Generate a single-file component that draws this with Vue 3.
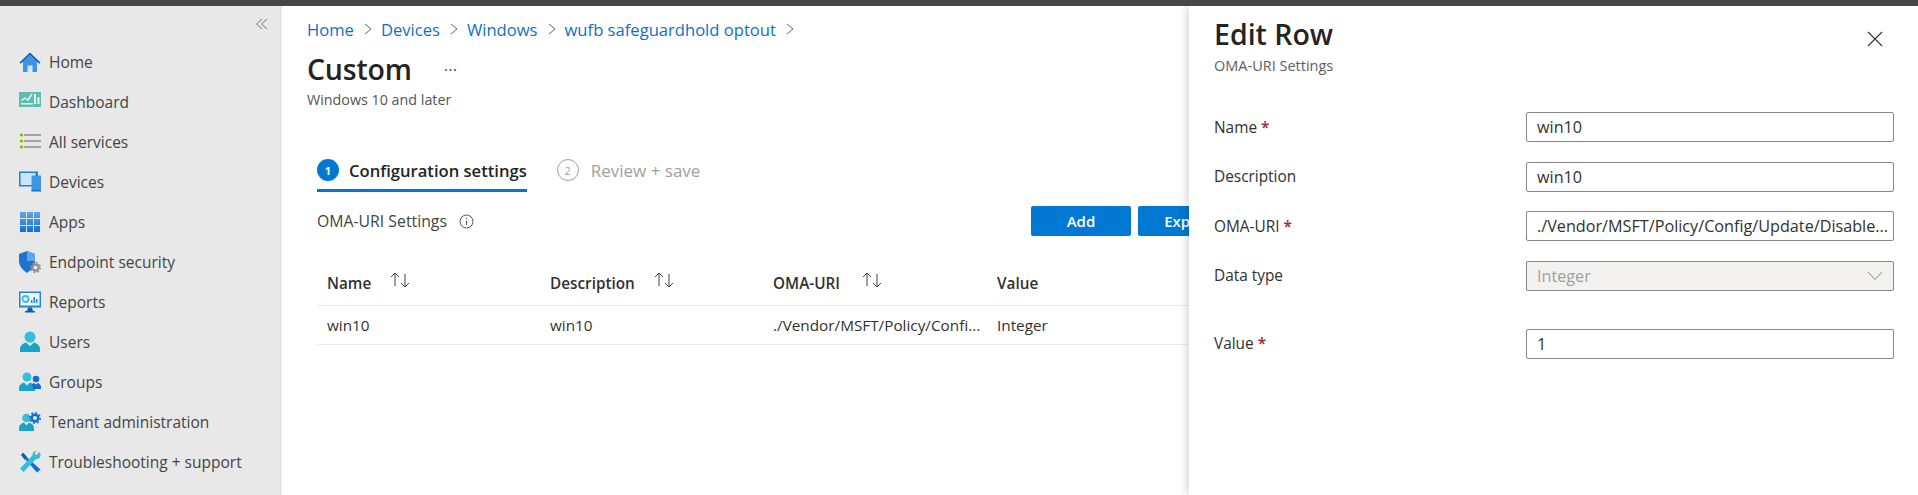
<script setup>
const crumbs = ['Home', 'Devices', 'Windows', 'wufb safeguardhold optout']
</script>

<template>
  <div class="page">
    <div class="topbar"></div>
    <div class="body">
      <aside class="side">
        <div class="collapse">
          <svg width="14" height="14" viewBox="0 0 14 14" fill="none" stroke="#777" stroke-width="1"><path d="M7 2 1.5 7 7 12M12 2 6.5 7 12 12"/></svg>
        </div>
        <nav class="nav">
          <a class="item"><svg class="ic" viewBox="0 0 22 22"><path d="M4 10.5 11 4l7 6.5V21H4z" fill="#3f92e8"/><path d="M0.5 11.5 11 1.5l10.5 10-1.2 1.2L11 4 1.7 12.7z" fill="#0b63b5"/><rect x="8.5" y="14.5" width="5" height="6.5" fill="#d4e6f7"/></svg><span>Home</span></a>
          <a class="item"><svg class="ic" viewBox="0 0 22 22"><rect y="1" width="22" height="15" fill="#5fbdb0"/><path d="M2.5 9.5 6 7l3 2 4-6" fill="none" stroke="#e5f6f3" stroke-width="1.4"/><rect x="2" y="12" width="12" height="1.5" fill="#e5f6f3"/><rect x="15" y="3" width="2" height="10" fill="#e5f6f3"/><rect x="18.5" y="6" width="2" height="7" fill="#e5f6f3"/></svg><span>Dashboard</span></a>
          <a class="item"><svg class="ic" viewBox="0 0 22 22"><path d="M5 4h17M5 10h17M5 16h17" stroke="#8a8a8a" stroke-width="1.3"/><path d="M1 4h3M1 10h3M1 16h3" stroke="#7fba00" stroke-width="2.4"/></svg><span>All services</span></a>
          <a class="item"><svg class="ic" viewBox="0 0 22 22"><rect y="0.5" width="19" height="15" fill="#1f7fd8"/><rect x="1.5" y="2" width="15" height="12" fill="#c9e6fa"/><rect x="12.5" y="4.5" width="9.5" height="15.5" fill="#3f92e8"/><rect x="12.5" y="19" width="9.5" height="1.5" fill="#0f6cc0"/></svg><span>Devices</span></a>
          <a class="item"><svg class="ic" viewBox="0 0 22 22"><defs><linearGradient id="ap" x1="0" y1="0" x2="0" y2="1"><stop offset="0" stop-color="#5ea7ef"/><stop offset="1" stop-color="#0f6fd4"/></linearGradient></defs><path d="M1 1h6v6H1zM8 1h6v6H8zM15 1h6v6h-6zM1 8h6v6H1zM8 8h6v6H8zM15 8h6v6h-6zM1 15h6v6H1zM8 15h6v6H8zM15 15h6v6h-6z" fill="url(#ap)"/></svg><span>Apps</span></a>
          <a class="item"><svg class="ic" viewBox="0 0 22 22"><path d="M8 0 16 3v7c0 5-3.500 9-8 12-4.500-3-8-7-8-12V3z" fill="#1d74d0"/><path d="M8 0l8 3v7H8z" fill="#5ea7ef"/><circle cx="16.500" cy="16.500" r="3.200" fill="none" stroke="#8c8c8c" stroke-width="2.200"/><circle cx="16.500" cy="16.500" r="5" fill="none" stroke="#8c8c8c" stroke-width="1.300" stroke-dasharray="1.800 2.100"/></svg><span>Endpoint security</span></a>
          <a class="item"><svg class="ic" viewBox="0 0 22 22"><rect y="0.500" width="22" height="16" fill="#1886d9"/><rect x="1.500" y="2" width="19" height="12.500" fill="#f3fafe"/><circle cx="6.500" cy="8" r="3" fill="none" stroke="#32bedd" stroke-width="1.800"/><path d="M12 12V9h1.500v3zM14.500 12V6H16v6zM17 12V8h1.500v4z" fill="#1f7fd8"/><path d="M9 16.500h4l1 3.500H8z" fill="#0f5fa8"/><rect x="6" y="20" width="10" height="1.500" fill="#0f5fa8"/></svg><span>Reports</span></a>
          <a class="item"><svg class="ic" viewBox="0 0 22 22"><circle cx="11" cy="6" r="5.500" fill="#32bedd"/><path d="M1 21v-3c0-4 4-6 6-6.500l4 3.500 4-3.500c2 .5 6 2.500 6 6.500v3z" fill="#1aa3c9"/><path d="M9 12h4l-2 3z" fill="#d5f3fb"/></svg><span>Users</span></a>
          <a class="item"><svg class="ic" viewBox="0 0 22 22"><circle cx="8" cy="6" r="4.500" fill="#32bedd"/><path d="M0 20v-3c0-3 3-5 5-5.500l3 3 3-3c2 .5 5 2.500 5 5.500v3z" fill="#1aa3c9"/><circle cx="17" cy="8" r="3.300" fill="#0f6fd4"/><path d="M14 18h8v-2c0-2-2-3.500-3-4l-2 1.500-2-1.500c-.8.300-1.500.800-2 1.500 .600 1.500 1 3 1 4.500z" fill="#0f6fd4"/></svg><span>Groups</span></a>
          <a class="item"><svg class="ic" viewBox="0 0 22 22"><circle cx="7.500" cy="7" r="4.300" fill="#32bedd"/><path d="M0 20v-3c0-3 3-5 5-5.500l2.500 3 2.500-3c2 .5 5 2.500 5 5.500v3z" fill="#1aa3c9"/><circle cx="16" cy="7" r="3.300" fill="none" stroke="#0f6fd4" stroke-width="2.400"/><circle cx="16" cy="7" r="5.200" fill="none" stroke="#0f6fd4" stroke-width="1.600" stroke-dasharray="2 2"/></svg><span>Tenant administration</span></a>
          <a class="item"><svg class="ic" viewBox="0 0 22 22"><path d="M4 1.500 2 4l4 5 2.500-2.500z" fill="#0f5fa8"/><path d="M7.500 6 6 8l12 13.500 3.500-3z" fill="#0f6fd4"/><path d="M20.500 1l-2.800 2.700-1.700-.4-.4-1.700L18 0c-2.500-.6-5 1.500-4.500 4.500L1 17.500 4.500 21 17 8c3 .5 5-2 4.500-4.500z" fill="#3abcd9"/></svg><span>Troubleshooting + support</span></a>
        </nav>
      </aside>

      <main class="main">
        <div class="crumbs">
          <template v-for="c in crumbs" :key="c">
            <a class="crumb">{{ c }}</a>
            <svg class="chev" width="10" height="12" viewBox="0 0 10 12" fill="none" stroke="#666" stroke-width="1"><path d="M2 1l6 5-6 5"/></svg>
          </template>
        </div>
        <div class="title-row">
          <h1>Custom</h1>
          <span class="more">···</span>
        </div>
        <p class="sub">Windows 10 and later</p>

        <section class="content">
          <div class="steps">
            <div class="step active">
              <span class="num">1</span>
              <span>Configuration settings</span>
            </div>
            <div class="step muted">
              <span class="num">2</span>
              <span>Review + save</span>
            </div>
          </div>

          <div class="toolbar">
            <div class="lbl">
              <span>OMA-URI Settings</span>
              <svg width="15" height="15" viewBox="0 0 15 15" fill="none" stroke="#555"><circle cx="7.500" cy="7.500" r="6.500"/><path d="M7.500 6.500V11M7.500 4v1.200"/></svg>
            </div>
            <div class="btns">
              <button class="btn">Add</button>
              <button class="btn">Export</button>
            </div>
          </div>

          <div class="grid head">
            <div class="cell">Name <svg class="sort" width="22" height="16" viewBox="0 0 22 16" fill="none" stroke="#444"><path d="M6 14V1M2 5l4-4 4 4M16 2v13M12 11l4 4 4-4"/></svg></div>
            <div class="cell">Description <svg class="sort" width="22" height="16" viewBox="0 0 22 16" fill="none" stroke="#444"><path d="M6 14V1M2 5l4-4 4 4M16 2v13M12 11l4 4 4-4"/></svg></div>
            <div class="cell">OMA-URI <svg class="sort wide" width="22" height="16" viewBox="0 0 22 16" fill="none" stroke="#444"><path d="M6 14V1M2 5l4-4 4 4M16 2v13M12 11l4 4 4-4"/></svg></div>
            <div class="cell">Value</div>
          </div>
          <div class="grid row">
            <div class="cell">win10</div>
            <div class="cell">win10</div>
            <div class="cell">./Vendor/MSFT/Policy/Confi...</div>
            <div class="cell">Integer</div>
          </div>
        </section>
      </main>

      <aside class="panel">
        <div class="panel-head">
          <div>
            <h2>Edit Row</h2>
            <p>OMA-URI Settings</p>
          </div>
          <svg class="close" width="16" height="16" viewBox="0 0 16 16" fill="none" stroke="#333" stroke-width="1.100"><path d="M1 1l14 14M15 1 1 15"/></svg>
        </div>
        <div class="form">
          <div class="field">
            <label>Name <b>*</b></label>
            <div class="input">win10</div>
          </div>
          <div class="field">
            <label>Description</label>
            <div class="input">win10</div>
          </div>
          <div class="field">
            <label>OMA-URI <b>*</b></label>
            <div class="input">./Vendor/MSFT/Policy/Config/Update/Disable...</div>
          </div>
          <div class="field">
            <label>Data type</label>
            <div class="input disabled">
              <span>Integer</span>
              <svg width="16" height="10" viewBox="0 0 16 10" fill="none" stroke="#8a8886"><path d="M1 1l7 7.500L15 1"/></svg>
            </div>
          </div>
          <div class="field spaced">
            <label>Value <b>*</b></label>
            <div class="input">1</div>
          </div>
        </div>
      </aside>
    </div>
  </div>
</template>

<style scoped>
.page {
  width: 1918px;
  height: 495px;
  overflow: hidden;
  display: flex;
  flex-direction: column;
  background: #fff;
  font-family: "Open Sans", "Noto Sans", sans-serif;
  color: #323130;
}
.topbar { height: 6px; background: #484644; flex: none; }
.body { flex: 1; display: flex; position: relative; overflow: hidden; }

.side {
  width: 280px;
  flex: none;
  background: #e8e8e8;
  border-right: 1px solid #e0e0e0;
  box-sizing: content-box;
  box-shadow: 1px 0 2px rgba(0,0,0,.08);
}
.collapse { height: 36px; display: flex; justify-content: flex-end; align-items: center; padding-right: 11px; }
.nav { display: flex; flex-direction: column; }
.item {
  height: 40px;
  display: flex;
  align-items: center;
  gap: 8px;
  padding-left: 19px;
  font-size: 15.500px;
  color: #444;
}
.ic { width: 22px; height: 22px; flex: none; }

.main { flex: 1; padding: 10px 0 0 26px; min-width: 0; }
.crumbs { display: flex; align-items: center; height: 26px; font-size: 16.600px; }
.crumb { color: #0f6fc6; }
.chev { margin: 0 8px 0 9px; }
.title-row { display: flex; align-items: center; height: 44px; margin-top: 5px; }
h1 { margin: 0; font-size: 28.500px; font-weight: 600; color: #252423; letter-spacing: -.2px; }
.more { margin-left: 32px; font-size: 17px; color: #555; }
.sub { margin: -1px 0 0; font-size: 14.300px; color: #555; line-height: 20px; }

.content { padding-left: 10px; margin-top: 41px; }
.steps { display: flex; gap: 30px; height: 55px; }
.step { display: flex; align-items: center; gap: 10px; font-size: 16.600px; height: 38px; }
.step.active { font-weight: 600; color: #252423; border-bottom: 3px solid #0078d4; }
.step.muted { color: #a19f9d; font-size: 17px; gap: 12px; }
.num {
  width: 22px; height: 22px; border-radius: 50%;
  display: flex; align-items: center; justify-content: center;
  font-size: 11px; font-weight: 700;
  background: #0078d4; color: #fff;
}
.muted .num { background: #fff; border: 1px solid #a19f9d; color: #a19f9d; font-weight: 400; box-sizing: border-box; }

.toolbar { display: flex; justify-content: space-between; align-items: center; height: 30px; }
.lbl { display: flex; align-items: center; gap: 12px; font-size: 15.800px; color: #444; }
.btns { display: flex; gap: 7px; position: absolute; left: 1031px; }
.btn {
  height: 30px; width: 100px; border: 0; border-radius: 2px; background: #0078d4; color: #fff;
  font: 600 15px "Open Sans", sans-serif; padding: 0;
}
.grid { display: grid; grid-template-columns: 223px 223px 224px 1fr; }
.grid .cell { padding-left: 10px; font-size: 15.300px; display: flex; align-items: center; white-space: nowrap; }
.head { margin-top: 18px; height: 52px; padding-top: 6px; box-sizing: border-box; border-bottom: 1px solid #edebe9; font-weight: 600; }
.sort { margin-left: 18px; margin-bottom: 6px; }
.sort.wide { margin-left: 21px; }
.row { height: 39px; box-sizing: border-box; border-bottom: 1px solid #edebe9; }

.panel {
  position: absolute;
  top: 0; bottom: 0; right: 0;
  width: 729px;
  background: #fff;
  box-shadow: -3px 0 8px rgba(0,0,0,.14);
  padding-left: 25px;
  box-sizing: border-box;
}
.panel-head { display: flex; justify-content: space-between; padding: 9px 35px 0 0; height: 88px; box-sizing: border-box; }
h2 { margin: 0; font-size: 28.500px; font-weight: 600; line-height: 38px; color: #252423; }
.panel-head p { margin: 4px 0 0; font-size: 14.500px; color: #605e5c; line-height: 18px; }
.close { margin-top: 16px; }
.form { padding-top: 18px; }
.field { display: grid; grid-template-columns: 312px 368px; align-items: center; height: 30px; margin-bottom: 19.500px; }
.field.spaced { margin-top: 38px; }
label { font-size: 15.400px; color: #323130; }
label b { color: #a4262c; font-weight: 600; }
.input {
  height: 30px; box-sizing: border-box;
  border: 1px solid #8a8886; border-radius: 2px;
  padding: 0 10px; font-size: 16.200px; line-height: 28px;
  color: #323130; white-space: nowrap; overflow: hidden;
}
.input.disabled { background: #f3f2f1; color: #a19f9d; display: flex; align-items: center; justify-content: space-between; }
</style>
